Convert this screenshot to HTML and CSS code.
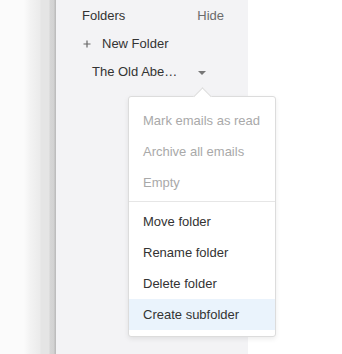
FILE: index.html
```html
<!DOCTYPE html>
<html>
<head>
<meta charset="utf-8">
<link rel="stylesheet" href="styles.css">
</head>
<body>
<div class="app">
  <div class="edge"></div>
  <aside class="sidebar">
    <div class="row header">
      <span class="title">Folders</span>
      <span class="hide">Hide</span>
    </div>
    <div class="row new-folder">
      <svg class="plus" width="8" height="8" viewBox="0 0 8 8"><path d="M4 0.5V7.5M0.5 4H7.5" stroke="#666" stroke-width="1.2" fill="none"/></svg>
      <span>New Folder</span>
    </div>
    <div class="row folder">
      <span class="name">The Old Abe…</span>
      <span class="caret"></span>
    </div>
  </aside>
  <div class="rest"></div>
</div>
<div class="menu">
  <ul class="group">
    <li class="item disabled">Mark emails as read</li>
    <li class="item disabled">Archive all emails</li>
    <li class="item disabled">Empty</li>
  </ul>
  <div class="sep"></div>
  <ul class="group">
    <li class="item">Move folder</li>
    <li class="item">Rename folder</li>
    <li class="item">Delete folder</li>
    <li class="item active">Create subfolder</li>
  </ul>
</div>
</body>
</html>
```
FILE: styles.css
```css
html, body {
  margin: 0;
  padding: 0;
  background: #ffffff;
  font-family: "Liberation Sans", Arial, sans-serif;
  font-size: 13px;
  color: #333;
}
.app {
  display: flex;
  height: 354px;
}
.edge {
  width: 56px;
  flex: none;
  background: linear-gradient(to right,
    #fbfbfb 0px, #fbfbfb 24px,
    #f3f3f3 30px, #ebebeb 40px,
    #e5e5e5 41px, #e5e5e5 49px,
    #d6d6d6 50px, #d2d2d2 54px,
    #bdbdbd 55px, #bdbdbd 56px);
}
.sidebar {
  width: 192px;
  flex: none;
  background: #f3f3f5;
  padding-top: 2px;
  box-sizing: border-box;
}
.rest {
  flex: 1;
  background: #ffffff;
}
.row {
  height: 28px;
  line-height: 28px;
  display: flex;
  align-items: center;
}
.header {
  justify-content: space-between;
  padding: 0 24px 0 26px;
}
.title { color: #333; }
.hide { color: #6b6b6b; }
.new-folder {
  padding-left: 27px;
  color: #333;
}
.plus {
  margin-right: 11px;
}
.folder {
  padding-left: 36px;
  color: #333;
}
.name {
  width: 106px;
}
.caret {
  width: 0;
  height: 0;
  border-left: 4px solid transparent;
  border-right: 4px solid transparent;
  border-top: 4px solid #777;
  margin-top: 1px;
}
.menu {
  position: absolute;
  left: 128px;
  top: 96px;
  width: 148px;
  box-sizing: border-box;
  background: #fff;
  border: 1px solid #dcdcdc;
  border-radius: 3px;
  box-shadow: 0 2px 5px rgba(0,0,0,0.08);
  padding: 8px 0 6px;
}
.menu::before {
  content: "";
  position: absolute;
  left: 67px;
  top: -7px;
  width: 12px;
  height: 12px;
  background: #fff;
  border-top: 1px solid #dcdcdc;
  border-left: 1px solid #dcdcdc;
  transform: rotate(45deg);
}
.group {
  list-style: none;
  margin: 0;
  padding: 0;
}
.item {
  height: 31px;
  line-height: 31px;
  padding-left: 14px;
  color: #333;
  position: relative;
}
.item.disabled {
  color: #a9a9a9;
}
.item.active {
  background: #eaf3fc;
}
.sep {
  height: 1px;
  background: #e6e6e6;
  margin: 3px 0 4px;
}
```
